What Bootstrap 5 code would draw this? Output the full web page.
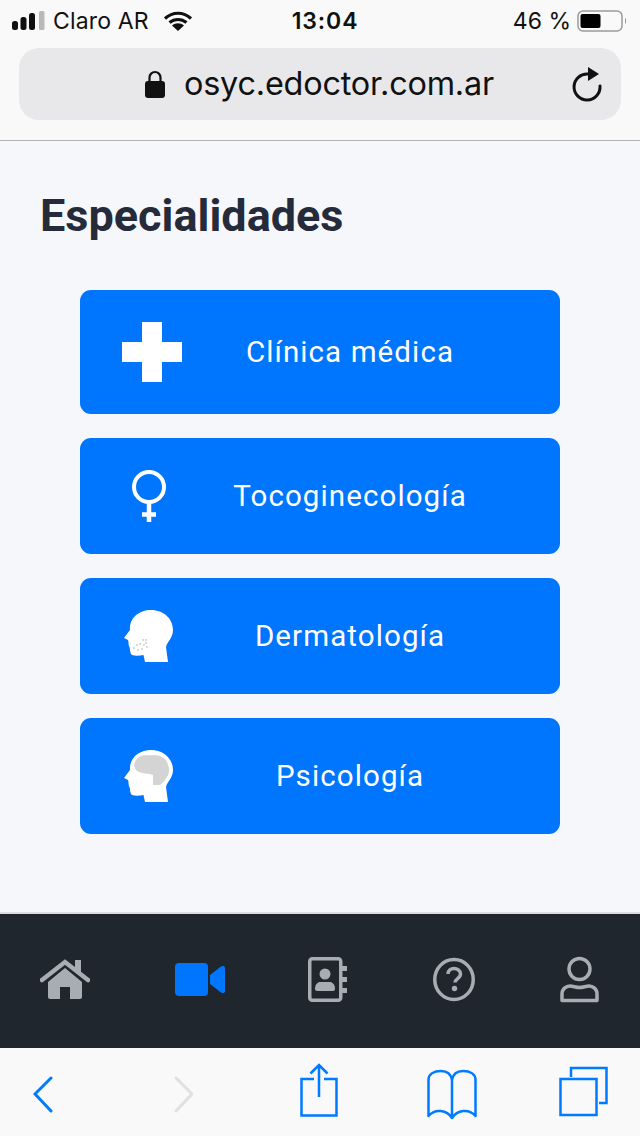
<!DOCTYPE html>
<html lang="es">
<head>
<meta charset="utf-8">
<meta name="viewport" content="width=device-width, initial-scale=1.0">
<title>Especialidades</title>
<link href="https://cdn.jsdelivr.net/npm/bootstrap@5.3.1/dist/css/bootstrap.min.css" rel="stylesheet">
<style>
body {background:#f9f9f9;font-family:"Roboto",sans-serif;width:640px;height:1136px;overflow:hidden;}
svg {display:block;flex:none;}
.chrome-top {height:141px;background:#f9f9f9;border-bottom:1px solid #b4b4b6;padding:0 12px;font-family:"Inter",sans-serif;color:#111;}
.status-bar {height:42px;margin-bottom:6px;font-size:23px;}
.carrier {margin-left:8px;margin-right:15px;letter-spacing:.15px;}
.clock {font-weight:600;margin-left:100px;letter-spacing:.9px;}
.batt {margin-left:auto;margin-right:6px;}
.url-bar {height:72px;width:602px;margin-left:7px;background:#e8e8ea;border-radius:20px;font-size:32.4px;padding:0 19px 0 126px;}
.url-text {margin-left:19px;letter-spacing:-.2px;margin-right:auto;}
.main-area {height:771px;background:#f6f7fb;padding:52px 0 0 0;}
.page-title {font-size:45px;font-weight:700;color:#252b3b;margin:0 0 51px 40px;line-height:46px;}
.spec-list {width:480px;margin-left:80px;gap:24px;}
.spec-btn {height:116px;background:#0076ff;border:0;border-radius:11px;color:#fff;font-size:29.5px;letter-spacing:1.1px;padding:0;}
.spec-btn.first {height:124px;}
.spec-btn:hover {background:#0076ff;color:#fff;}
.spec-ico {width:144px;}
.ico-shift {margin-right:7px;}
.spec-txt {flex:1;padding-right:84px;text-align:center;}
.app-nav {height:136px;background:#1f262e;border-top:2px solid #dcdde0;padding:0 41px 0 40px;}
.nav-contacts {margin-left:-2px;}
.safari-bar {height:88px;background:#f9f9f9;padding-left:33px;}
.m-fwd {margin-left:121px;}
.m-share {margin-left:107px;}
.m-book {margin-left:89px;}
.m-tabs {margin-left:82px;}
</style>
</head>
<body>

<header class="chrome-top">
  <div class="status-bar d-flex align-items-center">
    <svg width="33" height="20" viewBox="0 0 33 20"><rect x="0" y="10" width="6" height="9" rx="2.500" fill="#111"/><rect x="8.500" y="6" width="6" height="13" rx="2.500" fill="#111"/><rect x="17" y="2" width="6" height="17" rx="2.500" fill="#111"/><rect x="27" y="0" width="5.500" height="19" rx="1.500" fill="#b9b9b9"/></svg>
    <span class="carrier">Claro AR</span>
    <svg width="28" height="20" viewBox="0 0 28 20"><path d="M1 7.500C8.500 .5 19.500 .5 27 7.500M5.500 11.500C10.500 7.500 17.500 7.500 22.500 11.500" fill="none" stroke="#111" stroke-width="3.200"/><path d="M14 20l-6-5.500c3.500-3 8.500-3 12 0z" fill="#111"/></svg>
    <span class="clock">13:04</span>
    <span class="batt">46 %</span>
    <svg width="51" height="22" viewBox="0 0 51 22"><rect x="1" y="1" width="44" height="20" rx="5" fill="none" stroke="#9a9a9a" stroke-width="1.500"/><rect x="3.500" y="4" width="20" height="14" rx="2" fill="#000"/><path d="M48 8c1.500.5 1.500 5.500 0 6z" fill="#9a9a9a"/></svg>
  </div>
  <div class="url-bar d-flex align-items-center">
    <svg width="20" height="28" viewBox="0 0 20 28"><path d="M4.500 12V7.500a5.500 5.500 0 0 1 11 0V12" fill="none" stroke="#111" stroke-width="2.200"/><rect x="0" y="11" width="20" height="17" rx="3" fill="#111"/></svg>
    <span class="url-text">osyc.edoctor.com.ar</span>
    <svg width="32" height="36" viewBox="0 0 32 36"><path d="M18 8A13 13 0 1 0 30 20" fill="none" stroke="#111" stroke-width="3" stroke-linecap="round"/><path d="M18 1l11 7-11 7z" fill="#111"/></svg>
  </div>
</header>

<main class="main-area">
  <h1 class="page-title">Especialidades</h1>
  <div class="spec-list d-flex flex-column">
    <button type="button" class="btn spec-btn first d-flex align-items-center">
      <span class="spec-ico d-flex justify-content-center">
        <svg width="60" height="60" viewBox="0 0 60 60"><path d="M20 0h20v20h20v20H40v20H20V40H0V20h20z" fill="#fff"/></svg>
      </span>
      <span class="spec-txt">Clínica médica</span>
    </button>
    <button type="button" class="btn spec-btn d-flex align-items-center">
      <span class="spec-ico d-flex justify-content-center">
        <svg class="ico-shift" width="34" height="52" viewBox="0 0 34 52"><circle cx="17" cy="17" r="15" fill="none" stroke="#fff" stroke-width="4"/><path d="M17 32v20M10 44.500h14" fill="none" stroke="#fff" stroke-width="4.500"/></svg>
      </span>
      <span class="spec-txt">Tocoginecología</span>
    </button>
    <button type="button" class="btn spec-btn d-flex align-items-center">
      <span class="spec-ico d-flex justify-content-center">
        <svg class="ico-shift" width="50" height="52" viewBox="0 0 50 52"><path d="M27 0C40 0 49 9 49 20C49 28 43 32 42 37L44 52H21L19.500 45C14 46 8 46 7 44C5.500 41 6.500 38 5 36C4 34 5 32 4 30L0 28L6 20C5 8 15 0 27 0Z" fill="#fff"/><g fill="#c9c9c9"><circle cx="19" cy="30" r=".9"/><circle cx="13" cy="35" r=".9"/><circle cx="16" cy="34" r=".9"/><circle cx="20" cy="35" r=".9"/><circle cx="22" cy="33" r=".9"/><circle cx="10" cy="38" r=".9"/><circle cx="14" cy="40" r=".9"/><circle cx="18" cy="39" r=".9"/><circle cx="22" cy="30" r=".9"/><circle cx="23" cy="37" r=".9"/></g></svg>
      </span>
      <span class="spec-txt">Dermatología</span>
    </button>
    <button type="button" class="btn spec-btn d-flex align-items-center">
      <span class="spec-ico d-flex justify-content-center">
        <svg class="ico-shift" width="50" height="52" viewBox="0 0 50 52"><path d="M27 0C40 0 49 9 49 20C49 28 43 32 42 37L44 52H21L19.500 45C14 46 8 46 7 44C5.500 41 6.500 38 5 36C4 34 5 32 4 30L0 28L6 20C5 8 15 0 27 0Z" fill="#fff"/><path d="M15 7C20 4 26 6 30 5C37 5 43 9 44 15C46 19 45 24 43 27C41 30 39 33 36 35H29V25C24 23 19 24 15 22C11 20 9 16 11 12C12 10 13 8 15 7Z" fill="#d4d4d4"/></svg>
      </span>
      <span class="spec-txt">Psicología</span>
    </button>
  </div>
</main>

<nav class="app-nav d-flex justify-content-between align-items-center">
  <svg width="50" height="60" viewBox="0 0 50 60"><path d="M35 9h6v14l-6-5z" fill="#a7adb3"/><path d="M2 29L25 11l23 18" fill="none" stroke="#a7adb3" stroke-width="4.500" stroke-linecap="round"/><path d="M25 17L8 31v15a2 2 0 0 0 2 2h10V36h10v12h10a2 2 0 0 0 2-2V31z" fill="#a7adb3"/></svg>
  <svg width="50" height="60" viewBox="0 0 50 60"><rect x="0" y="12" width="33" height="33" rx="4" fill="#0076ff"/><path d="M35 24l11-8.500c1.500-1 4-.5 4 1v24c0 1.500-2.500 2-4 1l-11-8.500z" fill="#0076ff"/></svg>
  <svg class="nav-contacts" width="40" height="60" viewBox="0 0 40 60"><rect x="1.750" y="7.750" width="31" height="41.500" rx="2.500" fill="none" stroke="#a7adb3" stroke-width="3.500"/><path d="M34 15h5v5h-5zM34 26h5v5h-5zM34 37h5v5h-5z" fill="#a7adb3"/><circle cx="17" cy="23" r="5.500" fill="#a7adb3"/><path d="M7 38c0-5 3-7 5-7h10c2 0 5 2 5 7 0 1-1 2-2 2H9c-1 0-2-1-2-2z" fill="#a7adb3"/></svg>
  <svg width="42" height="60" viewBox="0 0 42 60"><ellipse cx="21" cy="28.500" rx="19.250" ry="20" fill="none" stroke="#a7adb3" stroke-width="3.500"/><path d="M15 23c0-3.500 3-5.500 6-5.500s6.500 2 6.500 5.500c0 4.500-5.500 4.500-5.500 8.500" fill="none" stroke="#a7adb3" stroke-width="3.500"/><circle cx="21.500" cy="37.500" r="2.700" fill="#a7adb3"/></svg>
  <svg width="39" height="60" viewBox="0 0 39 60"><ellipse cx="19.500" cy="18" rx="10.500" ry="10.500" fill="none" stroke="#a7adb3" stroke-width="3.500"/><path d="M2 49.500V43c0-5 4-8 8-8 3 0 6 1.500 9.500 1.500S26 35 29 35c4 0 8 3 8 8v6.500z" fill="none" stroke="#a7adb3" stroke-width="3.500" stroke-linejoin="round"/></svg>
</nav>

<footer class="safari-bar d-flex align-items-center">
  <svg width="20" height="60" viewBox="0 0 20 60"><path d="M18 16L2 32l16 17" fill="none" stroke="#007aff" stroke-width="3" stroke-linecap="round"/></svg>
  <svg width="19" height="60" viewBox="0 0 19 60" class="m-fwd"><path d="M2 16l16 16L2 49" fill="none" stroke="#e0e0e0" stroke-width="3" stroke-linecap="round"/></svg>
  <svg width="38" height="60" viewBox="0 0 38 60" class="m-share"><path d="M14 17H1.500v36.500h35V17H24" fill="none" stroke="#007aff" stroke-width="2.500"/><path d="M19 35V3M10.500 11.500L19 3l8.500 8.500" fill="none" stroke="#007aff" stroke-width="2.500"/></svg>
  <svg width="50" height="60" viewBox="0 0 50 60" class="m-book"><path d="M25 56C20 48 8 46 1.500 54V18C1.500 12 7 9 14 9C20 9 24 12 25 18V56C30 48 42 46 48.500 54V18C48.500 12 43 9 36 9C30 9 26 12 25 18" fill="none" stroke="#007aff" stroke-width="2.500" stroke-linejoin="round"/></svg>
  <svg width="49" height="60" viewBox="0 0 49 60" class="m-tabs"><path d="M12 15V6h35.500v35H40" fill="none" stroke="#007aff" stroke-width="2.500"/><rect x="1.500" y="17" width="36" height="36" fill="none" stroke="#007aff" stroke-width="2.500"/></svg>
</footer>

<script src="https://cdn.jsdelivr.net/npm/bootstrap@5.3.1/dist/js/bootstrap.bundle.min.js"></script>
</body>
</html>
